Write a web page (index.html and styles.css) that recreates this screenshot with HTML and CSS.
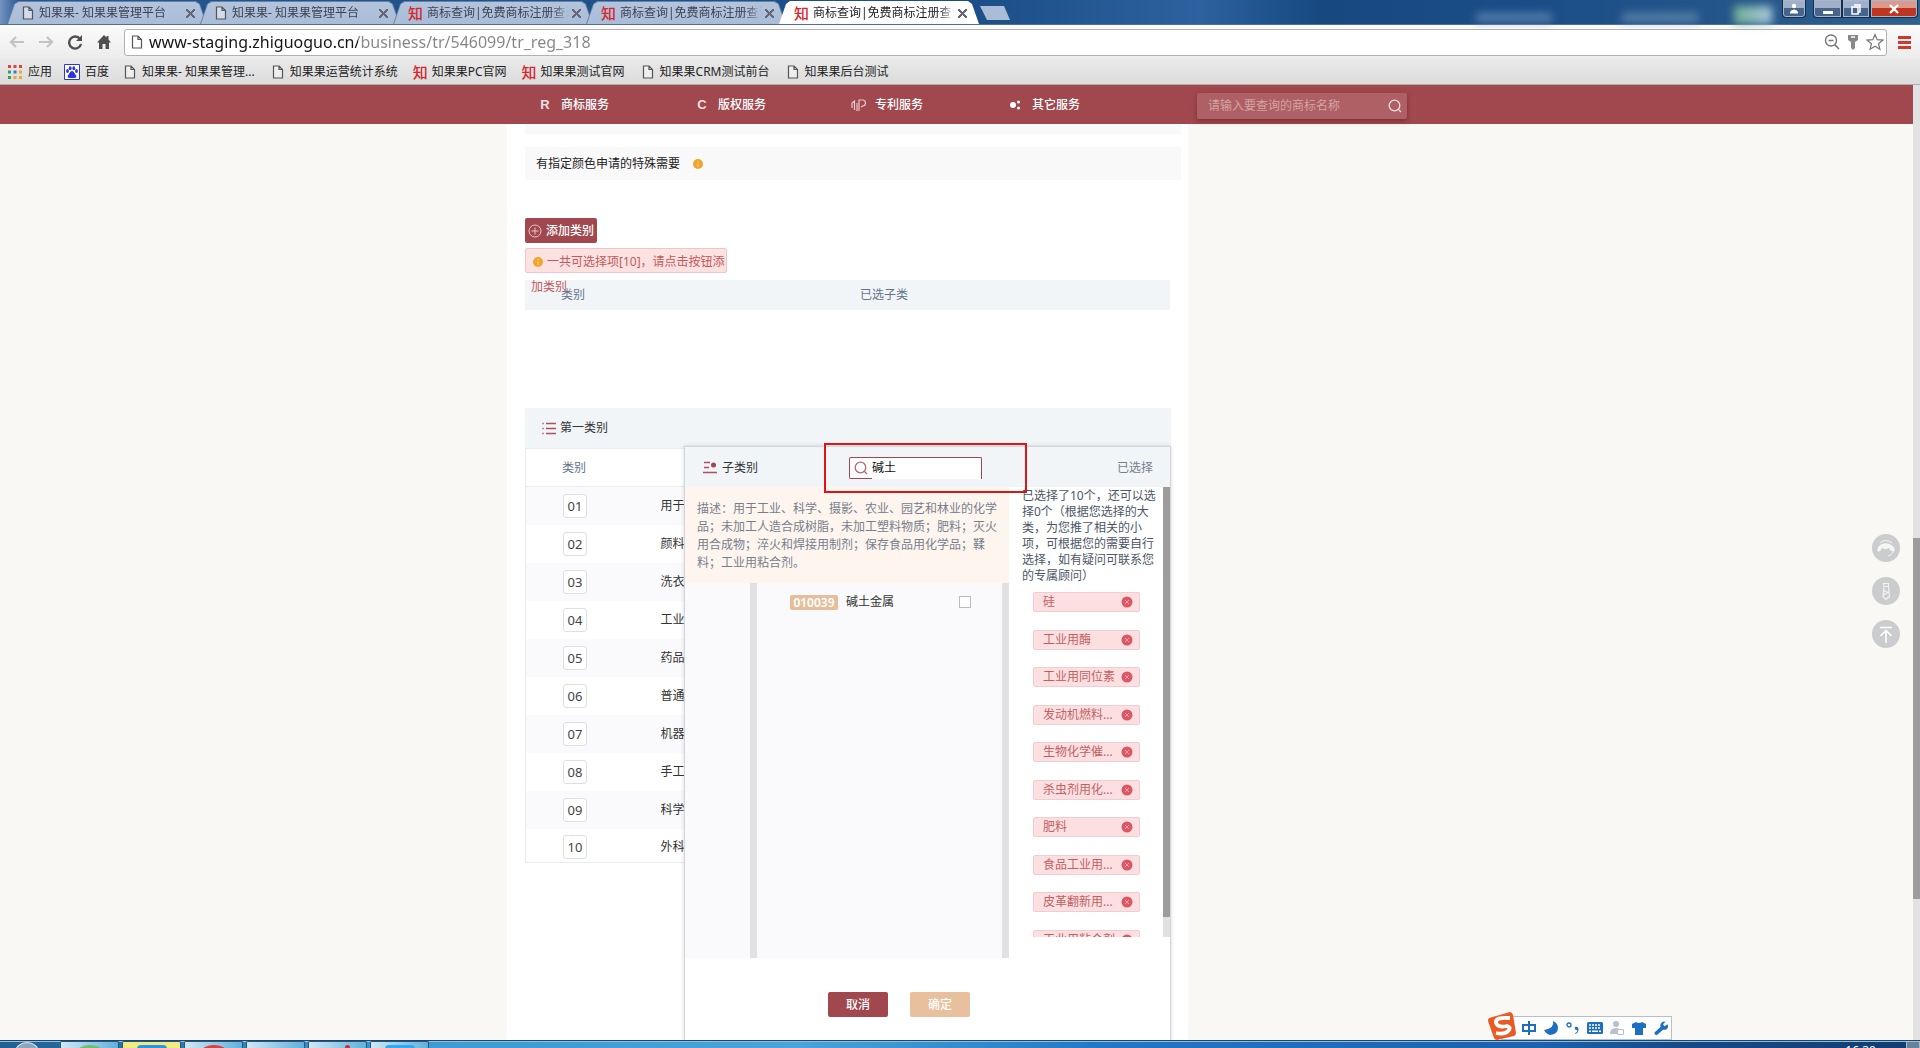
FILE: index.html
```html
<!DOCTYPE html>
<html lang="zh-CN">
<head>
<meta charset="utf-8">
<title>商标查询|免费商标注册查询</title>
<link rel="stylesheet" href="styles.css">
</head>
<body>
<svg width="0" height="0" class="defs" aria-hidden="true">
  <symbol id="doc" viewBox="0 0 12 14"><path d="M1.5 1h5.5l3.500 3.500V13H1.500zM7 1v3.500h3.500" fill="#fff" fill-opacity=".45" stroke="#555" stroke-width="1.200"/></symbol>
  <symbol id="info" viewBox="0 0 10 10"><circle cx="5" cy="5" r="5" fill="#f0a530"/><path d="M5 2v1M5 4v4" stroke="#f8d08a" stroke-width="1"/></symbol>
  <symbol id="remove" viewBox="0 0 12 12"><circle cx="6" cy="6" r="5.500" fill="#de5563"/><path d="M4 4l4 4M8 4l-4 4" stroke="#f3a9ae" stroke-width="1"/></symbol>
  <symbol id="lens" viewBox="0 0 14 14"><circle cx="6.500" cy="6.500" r="5.300" fill="none" stroke="currentColor" stroke-width="1.300"/><path d="M10.500 10.500l2.500 2.500" stroke="currentColor" stroke-width="1.300"/></symbol>
</svg>

<header class="browser">
  <div class="titlebar">
    <ul class="tabs">
      <li class="tab"><svg class="fav"><use href="#doc"/></svg><span class="tab-title">知果果- 知果果管理平台</span><button class="tab-close" aria-label="关闭标签页"></button></li>
      <li class="tab"><svg class="fav"><use href="#doc"/></svg><span class="tab-title">知果果- 知果果管理平台</span><button class="tab-close" aria-label="关闭标签页"></button></li>
      <li class="tab brand"><span class="zhi">知</span><span class="tab-title">商标查询|免费商标注册查询</span><button class="tab-close" aria-label="关闭标签页"></button></li>
      <li class="tab brand"><span class="zhi">知</span><span class="tab-title">商标查询|免费商标注册查询</span><button class="tab-close" aria-label="关闭标签页"></button></li>
      <li class="tab brand active"><span class="zhi">知</span><span class="tab-title">商标查询|免费商标注册查询</span><button class="tab-close" aria-label="关闭标签页"></button></li>
    </ul>
    <button class="new-tab" aria-label="新标签页"></button>
    <div class="ghost"><i class="ghost-text"></i><i class="ghost-text"></i><i class="ghost-icon"></i></div>
    <div class="window-buttons">
      <button class="win profile" aria-label="用户"><svg width="10" height="12" viewBox="0 0 10 12"><circle cx="5" cy="3" r="2.200" fill="#fff"/><path d="M1 10.500V9q1-2.500 4-2.500T9 9v1.500z" fill="#fff"/></svg></button>
      <button class="win min" aria-label="最小化"><svg width="12" height="12" viewBox="0 0 12 12"><path d="M1 8h10v3H1z" fill="#fff"/></svg></button>
      <button class="win max" aria-label="还原"><svg width="12" height="12" viewBox="0 0 12 12"><path d="M4 2h6v7H8M2 4h6v7H2z" fill="none" stroke="#fff" stroke-width="1.500"/></svg></button>
      <button class="win close" aria-label="关闭"><svg width="12" height="12" viewBox="0 0 12 12"><path d="M2 2l8 8M10 2l-8 8" stroke="#fff" stroke-width="2.400"/></svg></button>
    </div>
  </div>
  <div class="toolbar">
    <button class="tool" aria-label="后退"><svg width="18" height="16" viewBox="0 0 18 16"><path d="M16 8H3M8 3L3 8l5 5" fill="none" stroke="#c3c3c3" stroke-width="2.200"/></svg></button>
    <button class="tool" aria-label="前进"><svg width="18" height="16" viewBox="0 0 18 16"><path d="M2 8h13M10 3l5 5-5 5" fill="none" stroke="#c3c3c3" stroke-width="2.200"/></svg></button>
    <button class="tool" aria-label="刷新"><svg width="18" height="16" viewBox="0 0 18 16"><path d="M14 5A6 6 0 1 0 15 10" fill="none" stroke="#505050" stroke-width="2.400"/><path d="M16 1v6h-6z" fill="#505050"/></svg></button>
    <button class="tool" aria-label="主页"><svg width="18" height="16" viewBox="0 0 18 16"><path d="M9 1L2 8.500h2V15h3.500v-5h3v5H14V8.500h2L13.500 5.500V2h-2v1.500z" fill="#505050"/></svg></button>
    <div class="omnibox">
      <svg class="fav"><use href="#doc"/></svg>
      <input class="url" type="text" aria-label="地址" value="www-staging.zhiguoguo.cn/business/tr/546099/tr_reg_318">
      <svg width="16" height="18" viewBox="0 0 16 18"><circle cx="7" cy="7.500" r="5.500" fill="none" stroke="#777" stroke-width="1.400"/><path d="M4.500 7.500h5M11 12l4 4" stroke="#777" stroke-width="1.600"/></svg>
      <svg width="14" height="18" viewBox="0 0 14 18"><path d="M2 2h10v5L9 9v6l-2 2-2-2V9L2 7z" fill="#888"/><path d="M5 4h4" stroke="#fff" stroke-width="1.500"/></svg>
      <svg width="18" height="18" viewBox="0 0 18 18"><path d="M9 1.500l2.200 5.200 5.600.4-4.300 3.600 1.400 5.500L9 13.200l-4.900 3 1.400-5.500L1.200 7.100l5.600-.4z" fill="#fff" stroke="#777" stroke-width="1.200"/></svg>
    </div>
    <button class="menu" aria-label="菜单"><i></i><i></i><i></i></button>
  </div>
  <nav class="bookmarks">
    <a href="#"><svg class="apps" width="14" height="14" viewBox="0 0 14 14"><path d="M0 0h3v3H0zM5.500 0h3v3h-3zM11 0h3v3h-3z" fill="#d9453c"/><path d="M0 5.500h3v3H0zM0 11h3v3H0z" fill="#3a9c5a"/><path d="M5.500 5.500h3v3h-3z" fill="#3a78d8"/><path d="M11 5.500h3v3h-3zM5.500 11h3v3h-3zM11 11h3v3h-3z" fill="#efa92c"/></svg>应用</a>
    <a href="#" class="baidu"><svg width="16" height="16" viewBox="0 0 16 16"><path d="M.5.5h15v15H.5z" fill="#fff" stroke="#2b35d8"/><g fill="#2b35d8"><ellipse cx="3.500" cy="7" rx="1.400" ry="2"/><ellipse cx="6.200" cy="4.200" rx="1.400" ry="2"/><ellipse cx="9.800" cy="4.200" rx="1.400" ry="2"/><ellipse cx="12.500" cy="7" rx="1.400" ry="2"/><path d="M8 7q1.500 0 2.500 2t2 3q0 2-2 2H5.500q-2 0-2-2 1-1 2-3T8 7z"/></g></svg>百度</a>
    <a href="#"><svg class="fav"><use href="#doc"/></svg>知果果- 知果果管理...</a>
    <a href="#"><svg class="fav"><use href="#doc"/></svg>知果果运营统计系统</a>
    <a href="#" class="brand"><span class="zhi">知</span>知果果PC官网</a>
    <a href="#" class="brand"><span class="zhi">知</span>知果果测试官网</a>
    <a href="#"><svg class="fav"><use href="#doc"/></svg>知果果CRM测试前台</a>
    <a href="#"><svg class="fav"><use href="#doc"/></svg>知果果后台测试</a>
  </nav>
</header>

<div class="viewport">
  <div class="page">
    <nav class="site-nav">
      <ul class="services">
        <li><a href="#"><b class="letter">R</b>商标服务</a></li>
        <li><a href="#"><b class="letter">C</b>版权服务</a></li>
        <li><a href="#"><svg width="20" height="14" viewBox="0 0 20 14"><path d="M10 13V2h3.500a3 3 0 0 1 0 6L12 9M8 13V5M5.500 12V3L3 5v5" fill="none" stroke="#e9c9cb" stroke-width="1.200"/></svg>专利服务</a></li>
        <li><a href="#"><svg width="20" height="14" viewBox="0 0 20 14"><g fill="#fff"><circle cx="7" cy="7" r="3"/><circle cx="12.500" cy="4" r="1.500"/><circle cx="12.500" cy="10" r="1.500"/></g></svg>其它服务</a></li>
      </ul>
      <form class="site-search">
        <input type="text" placeholder="请输入要查询的商标名称" aria-label="商标名称">
        <button type="button" aria-label="查询"><svg width="14" height="14"><use href="#lens"/></svg></button>
      </form>
    </nav>

    <main class="sheet">
      <div class="strip upper"></div>
      <div class="strip">有指定颜色申请的特殊需要<svg class="info"><use href="#info"/></svg></div>

      <button class="add"><svg width="14" height="14" viewBox="0 0 14 14"><circle cx="7" cy="7" r="6" fill="none" stroke="#e6c6c8"/><path d="M7 3.500v7M3.500 7h7" stroke="#e6c6c8"/></svg>添加类别</button>
      <p class="notice"><svg class="info"><use href="#info"/></svg>一共可选择项[10]，请点击按钮添加类别</p>
      <table class="chosen"><thead><tr><th>类别</th><th>已选子类</th></tr></thead></table>

      <section class="picker">
        <h2><svg width="14" height="13" viewBox="0 0 14 13"><path d="M4 1.500h10M4 6.500h10M4 11.500h10" stroke="#b0505a" stroke-width="1.500"/><path d="M0 1.500h2M0 6.500h2M0 11.500h2" stroke="#c9858c" stroke-width="1.500"/></svg>第一类别</h2>
        <table class="classes">
          <thead><tr><th>类别</th><th></th></tr></thead>
          <tbody>
            <tr><td><span class="num">01</span></td><td>用于</td></tr>
            <tr><td><span class="num">02</span></td><td>颜料</td></tr>
            <tr><td><span class="num">03</span></td><td>洗衣</td></tr>
            <tr><td><span class="num">04</span></td><td>工业</td></tr>
            <tr><td><span class="num">05</span></td><td>药品</td></tr>
            <tr><td><span class="num">06</span></td><td>普通</td></tr>
            <tr><td><span class="num">07</span></td><td>机器</td></tr>
            <tr><td><span class="num">08</span></td><td>手工</td></tr>
            <tr><td><span class="num">09</span></td><td>科学</td></tr>
            <tr><td><span class="num">10</span></td><td>外科</td></tr>
          </tbody>
        </table>

        <div class="dialog">
          <header class="dialog-head">
            <h3><svg width="14" height="13" viewBox="0 0 14 13"><path d="M1 1.500h6M1 6.500h5M0 11.500h14" stroke="#b0505a" stroke-width="1.600"/><circle cx="10.500" cy="4" r="2.500" fill="#a0484e"/></svg>子类别</h3>
            <label class="sub-search"><span class="sub-icon"><svg width="14" height="14"><use href="#lens"/></svg></span><input type="text" aria-label="搜索子类别" value="碱土"></label>
            <span class="picked-title">已选择</span>
          </header>
          <div class="dialog-body">
            <div class="browse">
              <p class="desc">描述：用于工业、科学、摄影、农业、园艺和林业的化学品；未加工人造合成树脂，未加工塑料物质；肥料；灭火用合成物；淬火和焊接用制剂；保存食品用化学品；鞣料；工业用粘合剂。</p>
              <div class="lists">
                <div class="groups"></div>
                <div class="items">
                  <label class="item"><span class="code">010039</span><span class="item-name">碱土金属</span><input type="checkbox"></label>
                </div>
              </div>
            </div>
            <div class="picked">
              <div class="picked-content">
                <p>已选择了10个，还可以选择0个（根据您选择的大类，为您推了相关的小项，可根据您的需要自行选择，如有疑问可联系您的专属顾问）</p>
                <ul>
                  <li><span>硅</span><svg><use href="#remove"/></svg></li>
                  <li><span>工业用酶</span><svg><use href="#remove"/></svg></li>
                  <li><span>工业用同位素</span><svg><use href="#remove"/></svg></li>
                  <li><span>发动机燃料...</span><svg><use href="#remove"/></svg></li>
                  <li><span>生物化学催...</span><svg><use href="#remove"/></svg></li>
                  <li><span>杀虫剂用化...</span><svg><use href="#remove"/></svg></li>
                  <li><span>肥料</span><svg><use href="#remove"/></svg></li>
                  <li><span>食品工业用...</span><svg><use href="#remove"/></svg></li>
                  <li><span>皮革翻新用...</span><svg><use href="#remove"/></svg></li>
                  <li><span>工业用粘合剂</span><svg><use href="#remove"/></svg></li>
                </ul>
              </div>
              <div class="rail"><div class="thumb"></div></div>
            </div>
          </div>
          <footer class="actions"><button class="cancel">取消</button><button class="ok">确定</button></footer>
          <div class="marker"></div>
        </div>
      </section>
    </main>
  </div>
  <div class="page-rail"><div class="page-thumb"></div></div>

  <aside class="floaters">
    <button aria-label="客服"><svg width="28" height="28" viewBox="0 0 28 28"><path d="M6 18q-2-5 3-7.500 6-3 11 1 4 3 2 6.500-4-1-5-4-4 2-7 0-1 3-4 4z" fill="#f5f5f3"/><path d="M8 9q6-5 12 0M21 18q-1 3-5 4" fill="none" stroke="#f5f5f3"/></svg></button>
    <button aria-label="顾问"><svg width="28" height="28" viewBox="0 0 28 28"><path d="M11.500 6.500h5v3l1 10-3.500 3-3-3 1-10zM11.500 9.500h5M11.500 13l5 3M11.500 18l5-3" fill="none" stroke="#f2f2f0" stroke-width="1.200"/></svg></button>
    <button aria-label="返回顶部"><svg width="28" height="28" viewBox="0 0 28 28"><path d="M8 7.500h12M14 23V11M8.500 16l5.500-5.500 5.500 5.500" fill="none" stroke="#fff" stroke-width="1.600"/></svg></button>
  </aside>
</div>

<div class="ime">
  <svg class="sogou" width="30" height="28" viewBox="0 0 30 28"><path d="M1 6L22 0q2 0 3 3l3 18q0 2-2 3L9 28q-2 0-3-2L0 9q0-2 1-3z" fill="#ec5a24"/><path d="M22 6Q7 5 8 10.500t11 3.500q4 1 2 4-4 5-13 3" fill="none" stroke="#fff" stroke-width="3.800"/></svg>
  <svg width="16" height="16" viewBox="0 0 16 16"><path d="M2 5h12v6H2zM8 1v14" fill="none" stroke="#1f6fc0" stroke-width="2"/></svg>
  <svg width="16" height="16" viewBox="0 0 16 16"><path d="M10 1q2 7-9 9 2 4 6 5 8-1 8-7 0-5-5-7z" fill="#1f6fc0"/></svg>
  <svg width="16" height="16" viewBox="0 0 16 16"><circle cx="4" cy="5" r="2" fill="none" stroke="#1f6fc0" stroke-width="1.300"/><path d="M10 13q3-1 2-3-3 0-2-3 3-1 3.500 2 0 4-3 5z" fill="#1f6fc0"/></svg>
  <svg width="16" height="16" viewBox="0 0 16 16"><rect y="2" width="16" height="12" rx="1.500" fill="#1f6fc0"/><path d="M2 5h12M2 8h12" stroke="#fff" stroke-width="1.600" stroke-dasharray="2 1"/><path d="M2 11.300h2M5 11.300h6M12 11.300h2" stroke="#fff" stroke-width="1.600"/></svg>
  <svg width="16" height="16" viewBox="0 0 16 16"><circle cx="7" cy="4" r="3" fill="#b7bfd0"/><path d="M1 14q0-6 6-6 4 0 5 4v2z" fill="#b7bfd0"/><path d="M8.500 9.500h6v5h-6z" fill="#fff" stroke="#b7bfd0"/></svg>
  <svg width="16" height="16" viewBox="0 0 16 16"><path d="M5 2q3 2 6 0l4 2v4h-3v7H4V8H1V4z" fill="#1f6fc0"/></svg>
  <svg width="16" height="16" viewBox="0 0 16 16"><path d="M1.500 12.500l6-5.500q-1-4 3-5.500l2 .2-2.500 2.500 1.500 2 3-2q1.500 3-1 5-1.500 1-3.500.5L4 15q-3 0-2.500-2.500z" fill="#1f6fc0"/></svg>
</div>

<footer class="taskbar">
  <div class="start"></div>
  <div class="task green"></div>
  <div class="task yellow"></div>
  <div class="task red"></div>
  <div class="task"></div>
  <div class="task pen"></div>
  <div class="task blue"></div>
  <span class="clock">16:30</span>
  <div class="peek"></div>
</footer>
</body>
</html>
```

FILE: styles.css
```css
* { box-sizing: border-box; }

body {
  margin: 0;
  height: 100vh;
  display: flex;
  flex-direction: column;
  overflow: hidden;
  background: #f9f8f5;
  color: #333;
  font: 12px/18px "Noto Sans", "Noto Sans CJK SC", sans-serif;
}

ul, p, h2, h3 { margin: 0; padding: 0; list-style: none; font-size: 12px; font-weight: 400; }
button, input { font: inherit; padding: 0; border: 0; margin: 0; background: none; }
a { color: inherit; text-decoration: none; }
svg { flex: none; display: block; }
.defs { position: absolute; }
.fav { width: 12px; height: 14px; }
.zhi { flex: none; width: 16px; color: #d8262c; font-weight: 500; font-size: 15px; line-height: 18px; }

/* Browser frame */
.titlebar {
  display: flex;
  height: 25px;
  background: linear-gradient(90deg, #7492c2 0, #24568f 20px, #1b4d86 50%, #2b629f 1200px, #174880 1320px, #1b4d87 80%, #2f5f8e);
  border-bottom: 1px solid #55708f;
}
.tabs { display: flex; padding-left: 7px; }
.tab {
  position: relative;
  display: flex;
  align-items: center;
  gap: 5px;
  width: 200px;
  height: 24px;
  margin-right: -7px;
  padding: 2px 12px 0 15px;
  color: #3c4350;
  background: #6682a6;
  clip-path: polygon(0 100%, 7px 4px, 11px 1px, 189px 1px, 193px 4px, 100% 100%);
}
.tab::before {
  content: "";
  position: absolute;
  inset: 0;
  background: linear-gradient(180deg, #b4c4dc, #a9bcd8);
  clip-path: polygon(1px 100%, 8px 4px, 12px 2px, 188px 2px, 192px 4px, 199px 100%);
}
.tab > * { position: relative; }
.tab.brand { gap: 3px; }
.tab.active { z-index: 1; color: #222; background: #fff; }
.tab.active::before { background: #fff; }
.tab-title {
  flex: 1;
  overflow: hidden;
  white-space: nowrap;
  mask-image: linear-gradient(90deg, #000 calc(100% - 16px), transparent);
}
.tab-close { width: 9px; height: 9px; background: linear-gradient(45deg, transparent 43%, #667 43%, #667 57%, transparent 57%), linear-gradient(135deg, transparent 43%, #667 43%, #667 57%, transparent 57%); }
.new-tab { width: 30px; height: 14px; margin: 6px 0 0 8px; background: #a9bdd8; clip-path: polygon(0 0, 24px 0, 100% 100%, 7px 100%); }
.ghost { flex: 1; display: flex; align-items: flex-end; justify-content: flex-end; gap: 70px; padding-right: 10px; filter: blur(4px); }
.ghost-text { width: 76px; height: 9px; margin-bottom: 2px; background: #6f93b8; opacity: .7; }
.ghost-icon { width: 38px; height: 18px; margin-left: -34px; background: linear-gradient(90deg, #6fae92, #a9c9dd); }
.window-buttons { display: flex; align-items: flex-start; padding-right: 2px; }
.win { display: flex; justify-content: center; align-items: center; height: 18px; border: 1px solid #142d4d; border-top: 0; box-shadow: inset 0 0 0 1px #a6b6cb; background: linear-gradient(180deg, #9fb0c8 50%, #46648c 50%); }
.profile { width: 24px; margin-right: 7px; border-radius: 0 0 4px 4px; }
.min { width: 29px; border-radius: 0 0 0 4px; }
.max { width: 28px; }
.win.close { width: 48px; border-radius: 0 0 4px 0; background: linear-gradient(180deg, #dc9a8c 50%, #bf3520 50%); }

.toolbar { display: flex; align-items: center; height: 34px; padding: 0 9px 0 8px; background: linear-gradient(180deg, #fbfbfb, #ececec); }
.tool { width: 29px; }
.omnibox { flex: 1; display: flex; align-items: center; gap: 6px; height: 27px; padding: 0 2px 0 6px; background: #fff; border: 1px solid #b5b0ab; border-radius: 3px; }
.url {
  flex: 1;
  min-width: 0;
  font: 16px/24px "Noto Sans", sans-serif;
  color: transparent;
  background: linear-gradient(90deg, #151515 209px, #858585 209px);
  -webkit-background-clip: text;
  background-clip: text;
}
.menu { display: grid; gap: 2px; width: 13px; margin-left: 11px; }
.menu i { height: 3px; background: #d3362d; }
.bookmarks { display: flex; align-items: center; gap: 17px; height: 26px; padding-left: 8px; color: #222; background: linear-gradient(180deg, #e9e9e9, #dcdcdc); border-bottom: 1px solid #b3aeae; }
.bookmarks a { display: flex; align-items: center; gap: 6px; white-space: nowrap; }
.bookmarks .brand { gap: 3px; margin-left: -2px; }
.bookmarks .baidu { gap: 5px; margin: 0 -2px 0 -5px; }

/* Site */
.viewport { position: relative; flex: 1; display: flex; min-height: 0; }
.page { flex: 1; display: flex; flex-direction: column; overflow: hidden; background: #f9f8f5; }
.page-rail { width: 7px; background: #e2e2e2; }
.page-thumb { height: 361px; margin-top: 453px; background: #9c9c9c; }

.site-nav { flex: none; display: grid; grid-template-columns: 507fr 681px 725fr; height: 39px; color: #fff; background: #a0484e; }
.services { grid-column: 2; display: flex; padding-left: 28px; }
.services li { width: 157px; }
.services a { display: flex; align-items: center; gap: 6px; height: 39px; font-weight: 500; }
.letter { width: 20px; text-align: center; font: 700 13px/18px "Liberation Sans", sans-serif; color: #f3dfe0; }
.site-search { display: flex; align-items: center; width: 210px; height: 26px; margin: 8px 0 0 9px; padding: 0 5px 0 11px; background: #ae6065; box-shadow: 0 2px 5px rgba(70, 10, 15, .4); border-radius: 2px; }
.site-search input { flex: 1; min-width: 0; color: #fff; }
.site-search input::placeholder { color: #d3a4a2; opacity: 1; }
.site-search button { color: #f1dcdd; }

.sheet { flex: 1; width: 681px; margin-left: calc((100% - 681px) * 507 / 1232); min-height: 0; padding: 0 7px 0 18px; background: #fff; }
.strip { display: flex; align-items: center; gap: 13px; height: 33px; padding-left: 11px; background: #f9f9fa; color: #222; }
.strip.upper { height: 10px; margin-bottom: 13px; }
.info { width: 10px; height: 10px; }
.add { display: flex; align-items: center; gap: 4px; width: 72px; height: 25px; margin-top: 38px; padding-left: 3px; color: #fff; white-space: nowrap; font-weight: 500; background: #a0484e; border-radius: 2px; }
.notice { width: 202px; height: 25px; margin-top: 5px; padding-left: 5px; line-height: 25px; color: #c25a5c; background: #fce1e1; border: 1px solid #f1c5c8; border-radius: 2px; position: relative; z-index: 1; }
.notice .info { display: inline-block; margin: 0 4px 0 2px; vertical-align: -1px; }
.chosen { width: 645px; height: 30px; margin-top: 7px; table-layout: fixed; border-collapse: collapse; color: #64748a; background: #f1f5f8; }
.chosen th { padding: 0 0 0 36px; text-align: left; font-weight: 400; }
.chosen th:last-child { width: 346px; }

.picker { position: relative; width: 646px; margin-top: 98px; }
.picker h2 { display: flex; align-items: center; gap: 4px; height: 40px; padding-left: 17px; background: #f1f5f8; }
.classes { width: 646px; border-collapse: collapse; border: 1px solid #ebebf0; table-layout: fixed; }
.classes th { height: 38px; padding: 0 0 0 36px; text-align: left; font-weight: 400; color: #64748a; border-bottom: 1px solid #e9ebef; }
.classes th:first-child { width: 135px; }
.classes td { height: 38px; padding: 0; color: #333; }
.classes td:first-child { padding-left: 37px; }
.classes tbody tr:nth-child(odd) { background: #fafafc; }
.classes tbody tr:last-child td { height: 34px; padding-top: 3px; }
.num { display: block; width: 24px; height: 24px; font-size: 13px; line-height: 22px; text-align: center; color: #444; background: #fff; border: 1px solid #dcdfe3; border-radius: 3px; }

/* Sub-category dialog */
.dialog { position: absolute; top: 38px; left: 159px; width: 487px; height: 620px; background: #fff; border: 1px solid #d3d5da; box-shadow: 0 0 4px rgba(0, 0, 0, .16); }
.dialog-head { display: flex; align-items: center; height: 40px; padding: 1px 17px 0 18px; background: #f1f5f8; }
.dialog-head h3 { display: flex; align-items: center; gap: 5px; width: 146px; }
.sub-search { display: flex; width: 133px; height: 22px; background: #fff; border: solid #a0484e; border-width: 1px 1px 0; border-radius: 2px 2px 0 2px; }
.sub-icon { display: flex; align-items: center; justify-content: center; width: 22px; color: #b8666c; border-bottom: 1px solid #a0484e; }
.sub-search input { flex: 1; min-width: 0; color: #111; }
.picked-title { margin-left: auto; color: #76808c; }
.dialog-body { display: flex; height: 472px; }
.browse { width: 324px; }
.desc { height: 96px; padding: 13px 12px 0; color: #76808c; background: #fff5ef; }
.lists { display: flex; height: 375px; background: #fafafc; }
.groups { width: 72px; border-right: 7px solid #e1e1e2; }
.items { flex: 1; padding: 10px 31px 0 33px; border-right: 7px solid #e1e1e2; }
.item { display: flex; align-items: center; color: #333; }
.code { width: 48px; height: 15px; margin-right: 8px; text-align: center; line-height: 15px; font-weight: 600; color: #fff; background: #e5bf9c; border-radius: 2px; }
.item-name { flex: 1; }
.item input { appearance: none; width: 12px; height: 12px; background: #fff; border: 1px solid #bbb; }
.picked { flex: 1; display: flex; height: 450px; overflow: hidden; }
.picked-content { flex: 1; padding: 1px 0 0 13px; }
.picked p { width: 140px; line-height: 16px; color: #4c5666; }
.picked ul { padding: 8px 0 0 11px; }
.picked li { display: flex; align-items: center; width: 107px; height: 20px; margin-bottom: 17px; padding: 0 6px 0 9px; color: #c25f62; background: #fce0e1; border: 1px solid #f1cdd0; border-radius: 2px; }
.picked li:nth-child(odd) { margin-bottom: 18px; }
.picked li span { flex: 1; white-space: nowrap; }
.picked li svg { width: 12px; height: 12px; }
.rail { width: 7px; background: #e1e1e1; }
.thumb { height: 430px; background: #9c9c9c; }
.actions { display: flex; gap: 22px; margin: 33px 0 0 143px; }
.actions button { width: 60px; height: 25px; color: #fff; font-weight: 500; border-radius: 2px; }
.cancel { background: #a0484e; }
.ok { background: #e8c09e; }
.marker { position: absolute; top: -4px; left: 139px; width: 203px; height: 50px; border: 2px solid #dd1418; }

.floaters { position: absolute; right: 20px; top: 449px; display: grid; gap: 15px; }
.floaters button { width: 28px; height: 28px; background: #cbccce; border-radius: 50%; }

/* Desktop */
.ime { position: absolute; right: 248px; bottom: 8px; display: flex; align-items: center; gap: 6px; height: 24px; width: 184px; }
.ime::before { content: ""; position: absolute; inset: 0 0 0 13px; background: #fff; border: 1px solid #b5bfd2; }
.ime svg { position: relative; }
.ime .sogou { margin: -4px -3px 0 0; }
.taskbar { flex: none; position: relative; display: flex; gap: 3px; height: 8px; overflow: hidden; border-top: 1px solid #174870; background: linear-gradient(90deg, #215f92 0, #3b9bd2 400px, #4aa3d9 800px, #2378c4 1100px, #1c61ac 1550px, #164a86 1680px, #123d70); box-shadow: inset 0 1px #8fbede; }
.start { width: 24px; height: 20px; margin: 1px 18px 0 15px; border-radius: 50%; background: #8ea6b8; border: 1px solid #dbe4ea; }
.task { width: 59px; height: 12px; border: 1px solid #23587e; border-bottom: 0; border-radius: 2px 2px 0 0; background: linear-gradient(90deg, #d3e7f2, #62b0dc); }
.task::before { content: ""; display: block; width: 30px; height: 12px; margin: 3px auto 0; border-radius: 4px; }
.green::before { width: 24px; border-radius: 50%; background: #6fc069; }
.yellow { background: #f2ea80; }
.yellow::before { background: #2a94e8; }
.red::before { width: 24px; border-radius: 50%; background: #d8423c; }
.pen::before { width: 5px; margin-left: 36px; background: #c92d35; }
.blue::before { background: #35a8f5; }
.clock { margin-left: auto; margin-right: 27px; padding-top: 3px; color: #fff; line-height: 14px; }
.peek { width: 14px; height: 8px; background: #64829c; border: 1px solid #a9bccb; }
```
